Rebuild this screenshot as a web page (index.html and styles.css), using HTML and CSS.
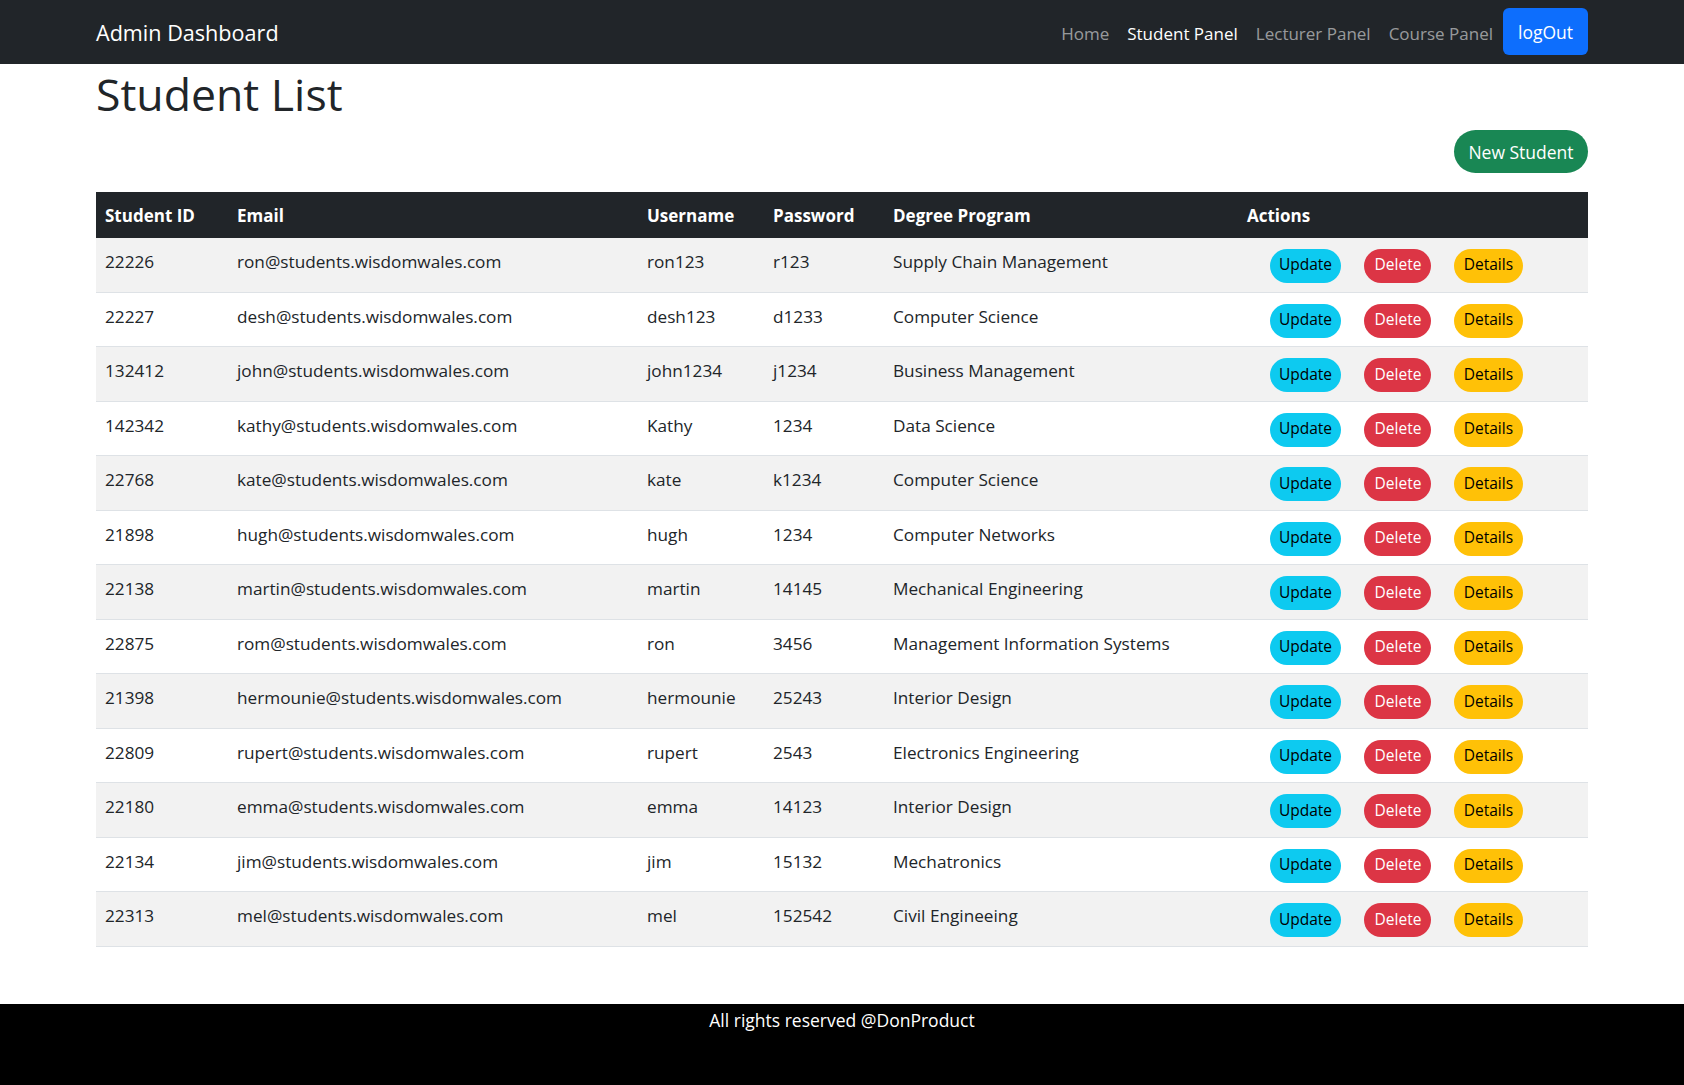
FILE: index.html
```html
<!DOCTYPE html>
<html lang="en">
<head>
<meta charset="utf-8">
<title>Admin Dashboard</title>
<link rel="stylesheet" href="styles.css">
</head>
<body>
<nav class="navbar">
  <div class="container nav-inner">
    <a class="brand" href="#">Admin Dashboard</a>
    <ul class="nav-links">
      <li><a class="nav-link" href="#">Home</a></li>
      <li><a class="nav-link active" href="#">Student Panel</a></li>
      <li><a class="nav-link" href="#">Lecturer Panel</a></li>
      <li><a class="nav-link" href="#">Course Panel</a></li>
      <li><a class="logout" href="#">logOut</a></li>
    </ul>
  </div>
</nav>
<main class="container main">
  <h1 class="title">Student List</h1>
  <div class="toolbar"><a class="pill new" href="#">New Student</a></div>
  <table class="students">
    <colgroup>
      <col class="c-id"><col class="c-email"><col class="c-user"><col class="c-pass"><col class="c-deg"><col class="c-act">
    </colgroup>
    <thead>
      <tr><th>Student ID</th><th>Email</th><th>Username</th><th>Password</th><th>Degree Program</th><th>Actions</th></tr>
    </thead>
    <tbody>
      <tr><td>22226</td><td>ron@students.wisdomwales.com</td><td>ron123</td><td>r123</td><td>Supply Chain Management</td><td class="acts"><a class="pill upd" href="#">Update</a> <a class="pill del" href="#">Delete</a> <a class="pill det" href="#">Details</a></td></tr>
      <tr><td>22227</td><td>desh@students.wisdomwales.com</td><td>desh123</td><td>d1233</td><td>Computer Science</td><td class="acts"><a class="pill upd" href="#">Update</a> <a class="pill del" href="#">Delete</a> <a class="pill det" href="#">Details</a></td></tr>
      <tr><td>132412</td><td>john@students.wisdomwales.com</td><td>john1234</td><td>j1234</td><td>Business Management</td><td class="acts"><a class="pill upd" href="#">Update</a> <a class="pill del" href="#">Delete</a> <a class="pill det" href="#">Details</a></td></tr>
      <tr><td>142342</td><td>kathy@students.wisdomwales.com</td><td>Kathy</td><td>1234</td><td>Data Science</td><td class="acts"><a class="pill upd" href="#">Update</a> <a class="pill del" href="#">Delete</a> <a class="pill det" href="#">Details</a></td></tr>
      <tr><td>22768</td><td>kate@students.wisdomwales.com</td><td>kate</td><td>k1234</td><td>Computer Science</td><td class="acts"><a class="pill upd" href="#">Update</a> <a class="pill del" href="#">Delete</a> <a class="pill det" href="#">Details</a></td></tr>
      <tr><td>21898</td><td>hugh@students.wisdomwales.com</td><td>hugh</td><td>1234</td><td>Computer Networks</td><td class="acts"><a class="pill upd" href="#">Update</a> <a class="pill del" href="#">Delete</a> <a class="pill det" href="#">Details</a></td></tr>
      <tr><td>22138</td><td>martin@students.wisdomwales.com</td><td>martin</td><td>14145</td><td>Mechanical Engineering</td><td class="acts"><a class="pill upd" href="#">Update</a> <a class="pill del" href="#">Delete</a> <a class="pill det" href="#">Details</a></td></tr>
      <tr><td>22875</td><td>rom@students.wisdomwales.com</td><td>ron</td><td>3456</td><td>Management Information Systems</td><td class="acts"><a class="pill upd" href="#">Update</a> <a class="pill del" href="#">Delete</a> <a class="pill det" href="#">Details</a></td></tr>
      <tr><td>21398</td><td>hermounie@students.wisdomwales.com</td><td>hermounie</td><td>25243</td><td>Interior Design</td><td class="acts"><a class="pill upd" href="#">Update</a> <a class="pill del" href="#">Delete</a> <a class="pill det" href="#">Details</a></td></tr>
      <tr><td>22809</td><td>rupert@students.wisdomwales.com</td><td>rupert</td><td>2543</td><td>Electronics Engineering</td><td class="acts"><a class="pill upd" href="#">Update</a> <a class="pill del" href="#">Delete</a> <a class="pill det" href="#">Details</a></td></tr>
      <tr><td>22180</td><td>emma@students.wisdomwales.com</td><td>emma</td><td>14123</td><td>Interior Design</td><td class="acts"><a class="pill upd" href="#">Update</a> <a class="pill del" href="#">Delete</a> <a class="pill det" href="#">Details</a></td></tr>
      <tr><td>22134</td><td>jim@students.wisdomwales.com</td><td>jim</td><td>15132</td><td>Mechatronics</td><td class="acts"><a class="pill upd" href="#">Update</a> <a class="pill del" href="#">Delete</a> <a class="pill det" href="#">Details</a></td></tr>
      <tr><td>22313</td><td>mel@students.wisdomwales.com</td><td>mel</td><td>152542</td><td>Civil Engineeing</td><td class="acts"><a class="pill upd" href="#">Update</a> <a class="pill del" href="#">Delete</a> <a class="pill det" href="#">Details</a></td></tr>
    </tbody>
  </table>
</main>
<footer class="footer">All rights reserved @DonProduct</footer>
</body>
</html>
```

FILE: styles.css
```css
* { box-sizing: border-box; }
html, body { margin: 0; padding: 0; }
body {
  font-family: "Open Sans", "Noto Sans", "Liberation Sans", sans-serif;
  font-size: 17.2px;
  line-height: 1.5;
  color: #212529;
  background: #fff;
  height: 1085px;
  display: flex;
  flex-direction: column;
}
a { text-decoration: none; }
.container {
  width: 1492px;
  margin: 0 auto;
}
.navbar {
  background: #212529;
  height: 64px;
}
.nav-inner {
  height: 64px;
  display: flex;
  align-items: center;
  justify-content: space-between;
}
.brand {
  color: #fff;
  font-size: 21.6px;
  margin-top: 3px;
}
.nav-links {
  list-style: none;
  margin: 0;
  padding: 0;
  display: flex;
  align-items: center;
}
.nav-link {
  display: block;
  color: rgba(255,255,255,0.55);
  font-size: 17px;
  padding: 0 9px;
  margin-top: 3px;
}
.nav-link.active { color: #fff; }
.logout {
  display: flex;
  align-items: center;
  margin-left: 1px;
  height: 47px;
  padding: 2px 15px 0;
  background: #0d6efd;
  color: #fff;
  border-radius: 6px;
  font-size: 17.5px;
  margin-top: -2px;
}
.main { flex: 1; }
.title {
  margin: 0;
  font-size: 44.6px;
  font-weight: 500;
  line-height: 1.2;
  padding-top: 3px;
}
.toolbar {
  display: flex;
  justify-content: flex-end;
  margin-top: 9px;
  margin-bottom: 19px;
}
.pill {
  display: inline-flex;
  align-items: center;
  justify-content: center;
  border-radius: 999px;
}
.new {
  background: #198754;
  color: #fff;
  height: 43px;
  width: 134px;
  font-size: 17.5px;
  padding-top: 2px;
}
.students {
  width: 100%;
  border-collapse: collapse;
  table-layout: fixed;
}
.c-id { width: 132px; }
.c-email { width: 410px; }
.c-user { width: 126px; }
.c-pass { width: 120px; }
.c-deg { width: 354px; }
.c-act { width: 350px; }
.students th {
  background: #212529;
  color: #fff;
  text-align: left;
  font-weight: 700;
  font-size: 17px;
  height: 46px;
  padding: 2px 9px 0;
}
.students td {
  padding: 11px 9px 0;
  height: 54.5px;
  vertical-align: top;
  border-bottom: 1px solid #dee2e6;
  color: #212529;
  white-space: nowrap;
}
.students tbody tr:nth-child(odd) td { background: #f2f2f2; }
.students td.acts { padding: 11px 0 0 32px; }
.acts .pill {
  height: 34px;
  font-size: 15.5px;
  padding: 0 0 1px;
}
.upd { background: #0dcaf0; color: #000; width: 71px; }
.del { background: #dc3545; color: #fff; width: 67px; margin-left: 19px; }
.det { background: #ffc107; color: #000; width: 69px; margin-left: 18px; }
.footer {
  background: #000;
  color: #fff;
  height: 81px;
  text-align: center;
  font-size: 17.5px;
  padding-top: 3px;
}
```
